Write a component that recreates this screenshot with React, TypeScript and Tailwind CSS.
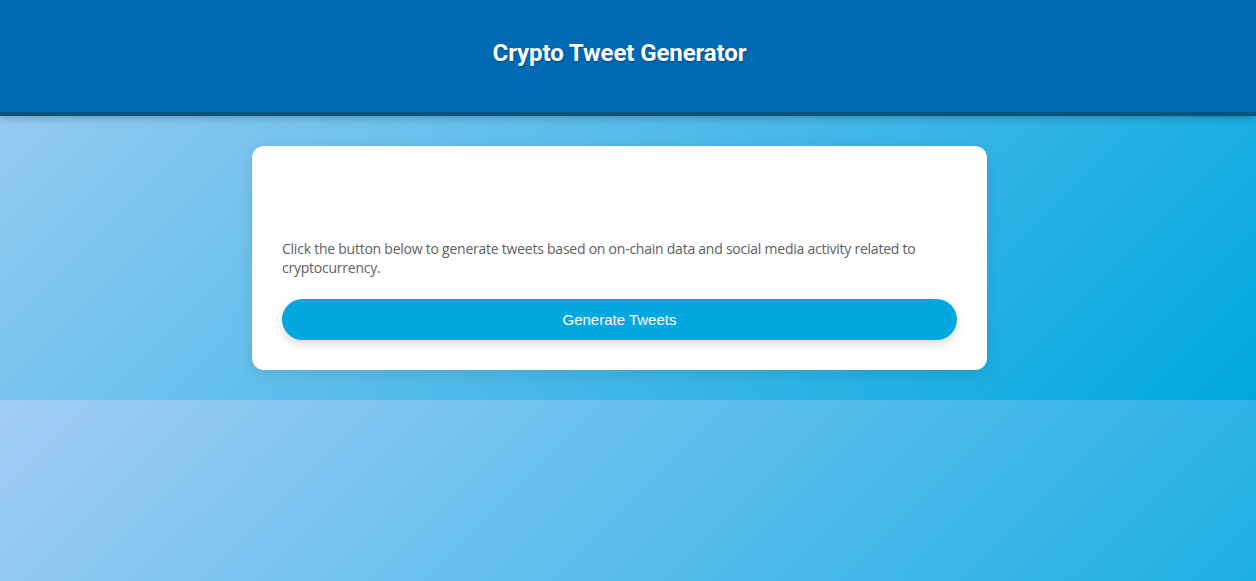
export default function App() {
  return (
    <div className="min-h-screen bg-[linear-gradient(135deg,#c7d5fa_0%,#1eb0e3_100%)] font-['Open_Sans',sans-serif]">
      <header className="h-[116px] bg-[#0069b4] border-b-4 border-[#0b5379] shadow-[0_2px_8px_rgba(0,0,0,0.25)] flex items-center justify-center pb-[6px] pr-[17px] relative z-10">
        <h1 className="text-white text-[24px] font-bold font-['Roboto',sans-serif] tracking-[-0.1px] [text-shadow:0_1px_2px_rgba(0,0,0,0.35)]">
          Crypto Tweet Generator
        </h1>
      </header>
      <main className="py-[30px] pl-[30px] pr-[47px] bg-[linear-gradient(135deg,#94cbf2_0%,#00a8df_100%)]">
        <div className="mx-auto w-[735px] bg-white rounded-[12px] p-[30px] shadow-[0_4px_16px_rgba(0,0,0,0.1)]">
          <div className="h-[63px]" />
          <p className="text-[14px] leading-[19px] text-[#606060] tracking-[-0.24px]">
            Click the button below to generate tweets based on on-chain data and social media activity related to cryptocurrency.
          </p>
          <button className="mt-[22px] w-full h-[41px] pt-[2px] rounded-full bg-[#00a8df] text-white text-[15px] font-['Liberation_Sans',Arial,sans-serif] shadow-[0_4px_10px_rgba(0,0,0,0.15)]">
            Generate Tweets
          </button>
        </div>
      </main>
    </div>
  );
}
